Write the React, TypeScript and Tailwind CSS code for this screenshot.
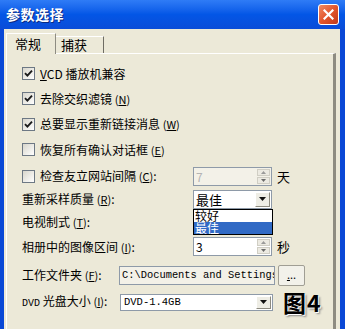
import React from 'react';

const Check = ({ checked }: { checked?: boolean }) => (
  <span className="w-[13px] h-[13px] border border-[#6d7884] bg-linear-to-br from-[#d8d6cc] to-white flex items-center justify-center shrink-0">
    {checked && (
      <svg width="9" height="9" viewBox="0 0 9 9">
        <path d="M1 4.2 L3.4 6.6 L8 1.6" stroke="#1b1b1b" strokeWidth="1.9" fill="none" />
      </svg>
    )}
  </span>
);

const Key = ({ k }: { k: string }) => (
  <span className="text-[11px]">
    (<span className="underline">{k}</span>)
  </span>
);

const Arrow = ({ up }: { up?: boolean }) => (
  <svg width="5" height="3" viewBox="0 0 5 3">
    <path d={up ? 'M0 3 L2.5 0 L5 3 Z' : 'M0 0 L2.5 3 L5 0 Z'} fill={up ? '#9a9a9a' : '#6a6a6a'} />
  </svg>
);

const Spin = ({ value, disabled }: { value: string; disabled?: boolean }) => (
  <div className={`w-[79px] h-[19px] border border-[#8e9aa8] flex ${disabled ? 'bg-[#f3f1e8]' : 'bg-white'}`}>
    <span className={`flex-1 pl-[2px] text-[12px] leading-[17px] ${disabled ? 'text-[#b4b4b4]' : 'text-black'}`}>{value}</span>
    <div className="w-[15px] flex flex-col gap-px p-px">
      <div className="flex-1 bg-[#eceae2] border border-[#d0cec4] flex items-center justify-center">
        <Arrow up />
      </div>
      <div className="flex-1 bg-[#eceae2] border border-[#d0cec4] flex items-center justify-center">
        <Arrow />
      </div>
    </div>
  </div>
);

const ComboBtn = () => (
  <div className="w-[15px] h-full bg-[#eeede5] border border-t-white border-l-white border-r-[#8d8b80] border-b-[#8d8b80] flex items-center justify-center">
    <svg width="7" height="4" viewBox="0 0 7 4">
      <path d="M0 0 L3.5 4 L7 0 Z" fill="#111" />
    </svg>
  </div>
);

export default function App() {
  return (
    <div className="w-[345px] h-[329px] overflow-hidden flex flex-col font-['Noto_Sans_CJK_SC',sans-serif] text-black bg-[#ece9d8]">
      {/* Title bar */}
      <div className="h-[29px] shrink-0 bg-linear-to-b from-[#2f7cf6] via-[#0356e6] to-[#0a4cd8] flex items-center justify-between pl-[6px] pr-[6px]">
        <span className="text-white font-bold text-[14px] tracking-[0.5px] [text-shadow:1px_1px_0_#0a2a80]">参数选择</span>
        <div className="w-[21px] h-[21px] rounded-[3px] border border-white bg-linear-to-br from-[#f08a63] via-[#e2552c] to-[#c0391a] flex items-center justify-center">
          <svg width="11" height="11" viewBox="0 0 11 11">
            <path d="M1.5 1.5 L9.5 9.5 M9.5 1.5 L1.5 9.5" stroke="white" strokeWidth="2.2" strokeLinecap="square" />
          </svg>
        </div>
      </div>

      <div className="flex flex-1">
        <div className="w-[4px] bg-[#0a48d6]" />
        <div className="flex-1 pl-[2px] pr-[4px] pt-[4px]">
          {/* Tabs */}
          <div className="flex items-end h-[20px] relative z-10">
            <div className="w-[50px] h-[21px] mb-[-1px] bg-[#ece9d8] border-t border-l border-white border-r border-r-[#8e8c82] flex items-center pl-[8px] text-[13px]">
              常规
            </div>
            <div className="w-[48px] h-[17px] border-t border-white border-r border-r-[#6f6d64] flex items-center pl-[5px] text-[13px]">
              捕获
            </div>
          </div>

          {/* Panel */}
          <div className="h-[280px] border-t border-l border-white border-r-[3px] border-r-[#8e8c82] pl-[15px] pt-[7px] text-[12px] leading-none">
            <div className="h-[25px] flex items-center gap-[5px]">
              <Check checked />
              <span>
                <span className="underline">V</span>CD 播放机兼容
              </span>
            </div>
            <div className="h-[25px] flex items-center gap-[5px]">
              <Check checked />
              <span>
                去除交织滤镜 <Key k="N" />
              </span>
            </div>
            <div className="h-[26px] flex items-center gap-[5px]">
              <Check checked />
              <span>
                总要显示重新链接消息 <Key k="W" />
              </span>
            </div>
            <div className="h-[25px] flex items-center gap-[5px]">
              <Check />
              <span>
                恢复所有确认对话框 <Key k="E" />
              </span>
            </div>

            <div className="h-[24px] mt-[2px] flex items-center">
              <div className="w-[171px] flex items-center gap-[5px]">
                <Check />
                <span>
                  检查友立网站间隔 <Key k="C" />:
                </span>
              </div>
              <Spin value="7" disabled />
              <span className="ml-[5px] text-[13px]">天</span>
            </div>

            <div className="h-[22px] flex items-center relative z-20">
              <div className="w-[171px]">
                重新采样质量 <Key k="R" />:
              </div>
              <div className="relative">
                <div className="w-[79px] h-[19px] border border-[#8e9aa8] bg-white flex p-px">
                  <span className="flex-1 pl-[1px] text-[13px] leading-[15px]">最佳</span>
                  <ComboBtn />
                </div>
                <div className="absolute left-0 top-full w-[80px] h-[26px] border border-black bg-white flex flex-col text-[12px] leading-[12px]">
                  <div className="h-[12px] pl-px">较好</div>
                  <div className="h-[12px] pl-px bg-[#316ac5] text-white">最佳</div>
                </div>
              </div>
            </div>

            <div className="h-[24px] flex items-center">
              <div className="w-[171px]">
                电视制式 <Key k="T" />:
              </div>
            </div>

            <div className="h-[25px] flex items-center">
              <div className="w-[171px]">
                相册中的图像区间 <Key k="I" />:
              </div>
              <Spin value="3" />
              <span className="ml-[5px] text-[13px]">秒</span>
            </div>

            <div className="h-[26px] mt-[3px] flex items-center">
              <div className="w-[97px]">
                工作文件夹 <Key k="F" />:
              </div>
              <div className="w-[156px] h-[19px] border border-[#8e9aa8] bg-[#f3f1e8] overflow-hidden whitespace-nowrap pl-[2px] font-['Liberation_Mono',monospace] text-[10.4px] leading-[17px]">
                C:\Documents and Settings
              </div>
              <div className="ml-[3px] w-[27px] h-[21px] bg-[#f2f1ea] border border-[#a09e94] rounded-[2px] flex items-end justify-center pb-[5px] text-[11px] leading-none">
                <span className="underline">.</span>..
              </div>
            </div>

            <div className="h-[28px] flex items-center">
              <div className="w-[98px] whitespace-nowrap">
                <span className="font-['Liberation_Mono',monospace] text-[10px]">DVD</span> 光盘大小 <Key k="I" />:
              </div>
              <div className="w-[153px] h-[17px] border border-[#8e9aa8] bg-white flex p-px">
                <span className="flex-1 pl-[2px] font-['Liberation_Mono',monospace] text-[10.5px] leading-[13px]">DVD-1.4GB</span>
                <ComboBtn />
              </div>
              <span className="ml-[10px] text-[23px] font-bold leading-none tracking-[1px] [text-shadow:1px_1px_0_#fff,2px_2px_2px_#888]">
                图4
              </span>
            </div>
          </div>
        </div>
        <div className="w-[5px] bg-[#0a48d6]" />
      </div>
    </div>
  );
}
